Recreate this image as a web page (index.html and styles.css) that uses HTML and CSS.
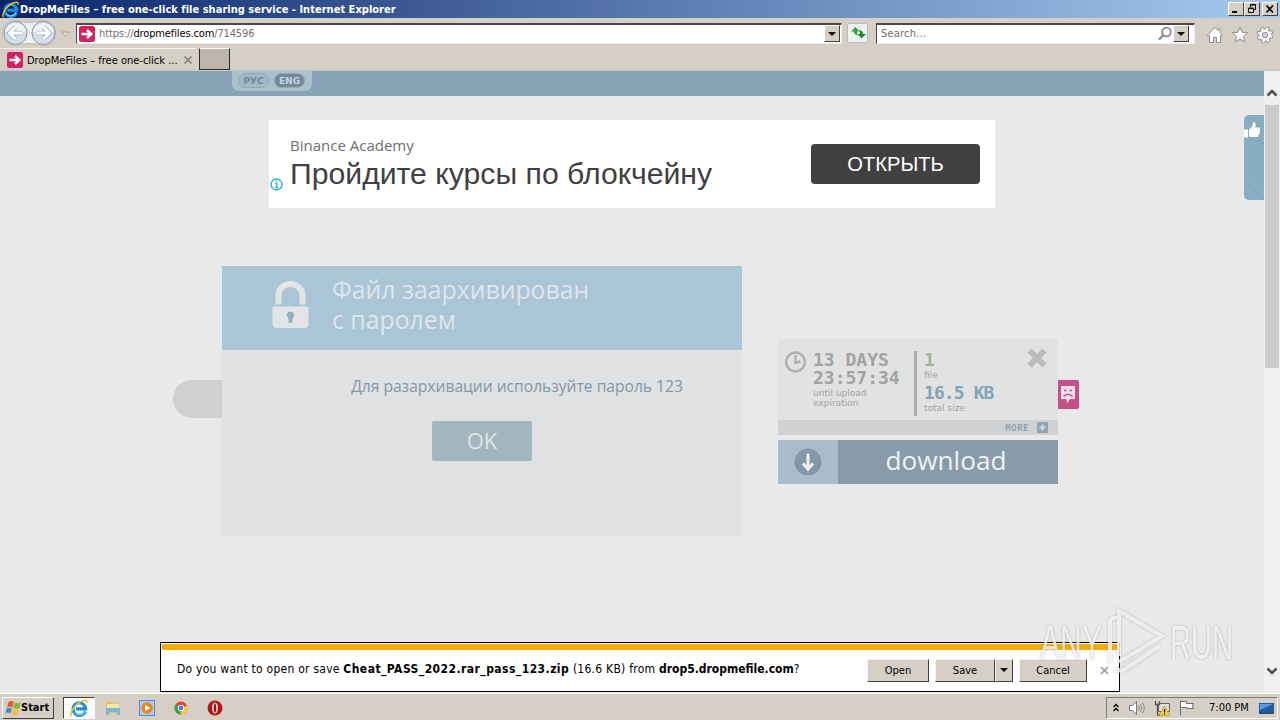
FILE: index.html
```html
<!DOCTYPE html>
<html lang="en">
<head>
    <meta charset="UTF-8">
    <meta name="viewport" content="width=device-width, initial-scale=1.0">
    <title>DropMeFiles – free one-click file sharing service</title>
    <link rel="stylesheet" href="styles.css">
</head>
<body>

    <!-- Shared icons -->
    <svg class="defs" width="0" height="0">
        <symbol id="ie" viewBox="0 0 16 16">
            <path d="M13.6 10.8A5.6 5.6 0 1 1 13.9 8.8H5.2" fill="none" stroke="#1d8fdd" stroke-width="2.8"/>
            <path d="M13.2 10.9A5.4 5.4 0 0 1 4 12" fill="none" stroke="#7ed0f8" stroke-width="1"/>
            <path d="M1.5 15C-1 12 5 4 11 1.700c3-1.200 4.500-.5 4 1.800" fill="none" stroke="#f1bd2c" stroke-width="1.400"/>
        </symbol>
        <symbol id="drop" viewBox="0 0 16 16">
            <rect width="16" height="16" rx="2.500" fill="#d5215f"/>
            <path d="M2.500 8h9M8 4l4.300 4L8 12" fill="none" stroke="#fff" stroke-width="2.400"/>
        </symbol>
    </svg>

    <!-- Title bar -->
    <div class="titlebar">
        <svg width="17" height="17"><use href="#ie"/></svg>
        <span class="title">DropMeFiles – free one-click file sharing service - Internet Explorer</span>
        <div class="window-buttons">
            <b><svg width="13" height="11"><path d="M3 9h5" stroke="#000" stroke-width="2"/></svg></b>
            <b><svg width="13" height="12"><path d="M5.500 4V1.500h5v5H8.500M5.500 2h5M3.500 5.500h5v4h-5zM3.500 5h5" fill="none" stroke="#000"/></svg></b>
            <b class="close"><svg width="13" height="12"><path d="M3.500 2.500l6.500 7M10 2.500l-6.500 7" stroke="#000" stroke-width="1.700"/></svg></b>
        </div>
    </div>

    <!-- Address bar -->
    <div class="toolbar">
        <svg class="nav-buttons" width="72" height="30" viewBox="0 0 72 30">
            <path d="M15 2.500q14 4 28 0a12.500 12.500 0 0 1 0 25q-14-4-28 0a12.500 12.500 0 0 1 0-25z" fill="#eceef1" stroke="#b9b7b8"/>
            <circle cx="15.500" cy="15" r="11.500" fill="#d3deea" stroke="#8d959f"/>
            <path d="M5 14a10.500 9 0 0 1 21 0z" fill="#edf2f7"/>
            <circle cx="43.500" cy="15" r="11.500" fill="#d3deea" stroke="#8d959f"/>
            <path d="M33 14a10.500 9 0 0 1 21 0z" fill="#edf2f7"/>
            <path d="M22 15H10M15.500 9L9.500 15l6 6" fill="none" stroke="#9fb2c6" stroke-width="4.500"/>
            <path d="M22 15H10M15.500 9L9.500 15l6 6" fill="none" stroke="#fff" stroke-width="2.800"/>
            <path d="M37 15h12M43.500 9l6 6-6 6" fill="none" stroke="#9fb2c6" stroke-width="4.500"/>
            <path d="M37 15h12M43.500 9l6 6-6 6" fill="none" stroke="#fff" stroke-width="2.800"/>
            <path d="M61.500 14h8l-4 4.500z" fill="#e4e0da" stroke="#aaa49e"/>
        </svg>
        <div class="address">
            <svg width="16" height="16"><use href="#drop"/></svg>
            <span class="url">https://<em>dropmefiles.com</em>/714596</span>
            <b class="arrow"></b>
        </div>
        <div class="refresh">
            <svg width="18" height="16"><path d="M6.500 2L2 6.500h2.800Q5 10 9 10.500 7.800 9 8 6.500h2.500z" fill="#35a535"/><path d="M12.500 13.500L17 9h-2.800Q14 5.500 10 5q1.200 1.500 1 4H8.500z" fill="#1f8a28"/></svg>
        </div>
        <div class="search">
            <span>Search...</span>
            <svg width="16" height="16"><circle cx="9.500" cy="6" r="4.300" fill="none" stroke="#83838b" stroke-width="1.700"/><path d="M6.500 9L2 13.500" stroke="#83838b" stroke-width="2.200"/></svg>
            <b class="arrow"></b>
        </div>
        <div class="tools">
            <svg width="18" height="18"><path d="M9 1.500L1.500 9l1 1.300 1-.8V16.500h4v-5h3v5h4V9.500l1 .8 1-1.300-2.500-2.600V3h-2v1.500z" fill="#fff" stroke="#8d8b8b"/></svg>
            <svg width="18" height="18"><path d="M9 1l2.200 5.300 5.500.5-4.200 3.700 1.300 5.600L9 13l-4.800 3.100 1.300-5.600L1.300 6.800l5.500-.5z" fill="#fff" stroke="#8d8b8b"/></svg>
            <svg width="18" height="18"><circle cx="9" cy="9" r="6.500" fill="none" stroke="#8d8b8b" stroke-width="3.800" stroke-dasharray="3.100 2"/><circle cx="9" cy="9" r="4.500" fill="none" stroke="#8d8b8b" stroke-width="4.500"/><circle cx="9" cy="9" r="6.300" fill="none" stroke="#fff" stroke-width="2.400" stroke-dasharray="2 2.950" stroke-dashoffset="-.4"/><circle cx="9" cy="9" r="4.400" fill="none" stroke="#fff" stroke-width="2.600"/></svg>
        </div>
    </div>

    <!-- Tabs -->
    <div class="tabs">
        <div class="tab">
            <svg width="16" height="16"><use href="#drop"/></svg>
            <span>DropMeFiles – free one-click ...</span>
            <svg class="tab-close" width="8" height="8"><path d="M.5.5l7 7M7.500.5l-7 7" stroke="#8c8681" stroke-width="1.800"/></svg>
        </div>
        <div class="new-tab"></div>
    </div>

    <div class="viewport">
        <div class="page">
            <div class="header">
                <div class="lang"><span>РУС</span><span class="active">ENG</span></div>
            </div>

            <!-- Ad banner -->
            <div class="ad">
                <svg class="ad-info" width="13" height="13"><circle cx="6.500" cy="6.500" r="5.500" fill="#fff" stroke="#15b4c9" stroke-width="1.300"/><path d="M5.300 5.700h1.500v4M5.200 9.700h3M6.500 2.800v1.500" fill="none" stroke="#15b4c9" stroke-width="1.200"/></svg>
                <div class="ad-text">
                    <p>Binance Academy</p>
                    <h2>Пройдите курсы по блокчейну</h2>
                </div>
                <button class="ad-button">ОТКРЫТЬ</button>
            </div>

            <div class="content">
                <div class="side-tab"></div>

                <!-- Password message -->
                <div class="message">
                    <div class="message-head">
                        <svg width="38" height="48" viewBox="0 0 38 48"><path d="M6.500 23.500V14a12 11 0 0 1 24 0v9.500" fill="none" stroke="#e3e4e6" stroke-width="6"/><path d="M.5 25.500h36V42.500q0 4.500-4.500 4.500H5Q.5 47 .5 42.500z" fill="#e3e4e6"/><path d="M18.500 30.500a3.700 3.700 0 0 1 2.300 6.600L20 42h-3l-.8-4.900A3.700 3.700 0 0 1 18.500 30.500z" fill="#94b0c0"/></svg>
                        <h1>Файл заархивирован<br>с паролем</h1>
                    </div>
                    <p>Для разархивации используйте пароль 123</p>
                    <button class="ok">OK</button>
                </div>

                <!-- Download card -->
                <div class="card">
                    <div class="info">
                        <svg class="clock" width="22" height="22"><circle cx="10.500" cy="11" r="9.400" fill="none" stroke="#aeb0b1" stroke-width="2.500"/><path d="M10.500 4v8l5-1.500" fill="none" stroke="#aeb0b1" stroke-width="2.400"/></svg>
                        <div class="expires">
                            <strong class="days">13 DAYS</strong>
                            <strong class="time">23:57:34</strong>
                            <small>until upload<br>expiration</small>
                        </div>
                        <div class="files">
                            <strong class="count">1</strong>
                            <small>file</small>
                            <strong class="size">16.5 KB</strong>
                            <small>total size</small>
                        </div>
                        <svg class="info-close" width="22" height="22"><path d="M3.500 3.500l15 15M18.500 3.500l-15 15" stroke="#bbbcbd" stroke-width="6"/></svg>
                    </div>
                    <div class="more">
                        <span>MORE</span>
                        <svg width="11" height="11"><rect width="11" height="11" rx="1" fill="#91a3b1"/><path d="M5.500 2.500v6M2.500 5.500h6" stroke="#d0dae1" stroke-width="2"/></svg>
                    </div>
                    <div class="download">
                        <div class="download-icon">
                            <svg width="28" height="28"><circle cx="14" cy="14" r="13.500" fill="#8499a7"/><path d="M14 5.500v15M9 15.500l5 5.500 5-5.500" fill="none" stroke="#eeeff0" stroke-width="3"/></svg>
                        </div>
                        <span>download</span>
                    </div>
                </div>
                <div class="abuse">
                    <svg width="16" height="18"><path d="M1 0h14v13h-5l-2.500 4L6 13H1z" fill="#f3dfe9"/><path d="M4 4.500h2.500M9.500 4.500H12M3.500 10.500q4.500-4.500 9 0" fill="none" stroke="#c44f89" stroke-width="1.500"/></svg>
                </div>
            </div>

            <div class="like">
                <svg width="18" height="18"><path d="M0 8.500h4v8H0zM5 8.500c3-2 4-4 4-7.500 3-.5 3 3 2 5.500h4.500q1.500 1 .2 2.500 1 1.200-.2 2.500.5 1.200-.8 2.300 0 1.700-1.200 2.200H8L5 15.500z" fill="#fff"/></svg>
            </div>
        </div>

        <!-- Scrollbar -->
        <div class="scrollbar">
            <svg width="16" height="14"><path d="M3.500 9.500L8 5l4.500 4.500" fill="none" stroke="#505050" stroke-width="2.600"/></svg>
            <div class="thumb"></div>
            <svg class="down" width="16" height="14"><path d="M3.500 4.500L8 9l4.500-4.500" fill="none" stroke="#505050" stroke-width="2.600"/></svg>
        </div>

        <!-- Download prompt -->
        <div class="prompt">
            <p>Do you want to open or save <b>Cheat_PASS_2022.rar_pass_123.zip</b> <span>(16.6 KB) from</span> <b class="host">drop5.dropmefile.com</b>?</p>
            <button class="open">Open</button>
            <button class="save">Save</button>
            <button class="save-arrow"><i class="caret"></i></button>
            <button class="cancel">Cancel</button>
            <svg width="9" height="9"><path d="M1 1l7 7M8 1L1 8" stroke="#9a9a9a" stroke-width="1.700"/></svg>
        </div>

        <!-- Watermark -->
        <svg class="watermark" width="200" height="70" viewBox="0 0 200 70">
            <text x="1" y="51" textLength="62" lengthAdjust="spacingAndGlyphs">ANY</text>
            <path d="M71 55V14q0-5 7-4M80 46V3l43 25-43 26M80 12v36M75 61l8 2 38-25"/>
            <text x="131" y="51" textLength="63" lengthAdjust="spacingAndGlyphs">RUN</text>
        </svg>
    </div>

    <!-- Taskbar -->
    <div class="taskbar">
        <div class="start">
            <svg width="16" height="16"><path d="M3.500 2q3-2 5.500 0L7.500 7.500Q4.500 6 2 7.500z" fill="#e8592a"/><path d="M10 2.500q3 1.500 6 0L14.500 8q-3 1.500-6 0z" fill="#7cb93b"/><path d="M1.500 8.500q3-1.500 5.500 0l-1.500 5q-2.500-2-5 0z" fill="#3c8ed0"/><path d="M8 9q3 1.500 6 0l-1.500 5.500q-3 1.500-6 0z" fill="#f5c02d"/></svg>
            <span>Start</span>
        </div>
        <div class="task-ie"><svg width="18" height="18"><use href="#ie"/></svg></div>
        <div class="launch">
            <svg width="16" height="16"><path d="M1 2h5l1 1.500h7V13H1z" fill="#e9bf54"/><path d="M2 4h12v8H2z" fill="#fbe7a0"/><path d="M1 8h14v7h-3v-3H4v3H1z" fill="#74b9df"/></svg>
            <svg width="16" height="16"><rect x=".5" y=".5" width="15" height="15" fill="#a9cdf0" stroke="#4d8fce"/><circle cx="8" cy="8" r="5.700" fill="#f48212"/><path d="M6 4.700v6.600L11.500 8z" fill="#fff"/></svg>
            <svg width="16" height="16"><circle cx="8" cy="8" r="6.500" fill="#e24435"/><path d="M8 8L2.400 4.800A6.500 6.500 0 0 0 7.500 14.500z" fill="#32a350"/><path d="M8 8l6-2.500a6.500 6.500 0 0 1-6.500 9z" fill="#fbca2c"/><circle cx="8" cy="8" r="3.200" fill="#fff"/><circle cx="8" cy="8" r="2.400" fill="#4583e8"/></svg>
            <svg width="16" height="16"><circle cx="8" cy="8" r="7.500" fill="#b5161b"/><ellipse cx="8" cy="8" rx="3" ry="5.500" fill="#f6dada"/><ellipse cx="8" cy="8" rx="1.200" ry="4.500" fill="#a01015"/></svg>
        </div>
        <div class="tray">
            <svg width="8" height="10"><path d="M1.500 4L4 1.500 6.500 4M1.500 8L4 5.500 6.500 8" fill="none" stroke="#000" stroke-width="1.300"/></svg>
            <svg width="18" height="16"><path d="M1.500 5.500h3l4-4v13l-4-4h-3z" fill="#fff" stroke="#777"/><path d="M10.500 5.500q1.500 2.500 0 5M12.500 4q2.500 4 0 8M14.500 2.500q3.500 5.500 0 11" fill="none" stroke="#888"/></svg>
            <svg width="16" height="16"><path d="M4.500 3.500h11v8h-11z" fill="#ddd" stroke="#666"/><path d="M1.500 1v3.500h4V1M3.500 5v10h5" fill="none" stroke="#555" stroke-width="1.300"/><path d="M10.500 6L16 15.500H5z" fill="#f8d331" stroke="#bc9511" stroke-width=".6"/><path d="M10.500 9v3.500m0 .8v1.200" stroke="#222" stroke-width="1.300"/></svg>
            <svg width="17" height="16"><path d="M2.500.5v15M2.500 1.500h6v2h7q-2 2.500 0 5H9v-1H2.500z" fill="#fff" stroke="#6f6f6f"/></svg>
            <span>7:00 PM</span>
            <svg width="15" height="12"><path d="M0 1h15v10H0z" fill="#1c5cab"/><path d="M1 2h13L1 8z" fill="#5b9bdd"/><path d="M0 9.500h15V12H0z" fill="#315070"/></svg>
        </div>
    </div>

</body>
</html>
```
FILE: styles.css
```css
* {
    box-sizing: border-box;
}

body {
    display: flex;
    flex-direction: column;
    width: 1280px;
    height: 720px;
    margin: 0;
    overflow: hidden;
    background-color: #d6cfc6;
    font-family: "DejaVu Sans Condensed", "DejaVu Sans", sans-serif;
    font-size: 11px;
    color: #000;
}

h1, h2, p {
    margin: 0;
    font-weight: normal;
}

svg {
    display: block;
    flex: none;
}

button {
    padding: 0;
    border: none;
    font-family: inherit;
    font-size: inherit;
}

.defs {
    position: absolute;
}

/* Title bar */
.titlebar {
    display: flex;
    align-items: center;
    height: 18px;
    padding: 0 2px;
    background: linear-gradient(to right, #0a246a, #a6caf0);
    color: #fff;
}

.title {
    margin-left: 1px;
    font-weight: bold;
    white-space: nowrap;
    letter-spacing: 0.02px;
}

.window-buttons {
    display: flex;
    margin-left: auto;
}

.window-buttons b {
    width: 16px;
    height: 14px;
    background-color: #d6cfc6;
    border: 1px solid;
    border-color: #fff #404040 #404040 #fff;
}

.window-buttons .close {
    margin-left: 2px;
}

/* Address bar */
.toolbar {
    display: flex;
    align-items: center;
    height: 30px;
    background-color: #d6cfc6;
}

.nav-buttons {
    margin-right: 4px;
}

.address, .search {
    display: flex;
    align-items: center;
    height: 21px;
    background-color: #fff;
    border: 1px solid;
    border-color: #4f4643 #eee9e4 #eee9e4 #4f4643;
    border-top-width: 2px;
}

.address {
    width: 766px;
    padding: 0 1px 0 2px;
}

.url {
    margin-left: 4px;
    color: #6f6f6f;
    letter-spacing: -0.13px;
}

.url em {
    color: #000;
    font-style: normal;
}

.arrow {
    display: flex;
    align-items: center;
    justify-content: center;
    width: 16px;
    height: 17px;
    background-color: #d6cfc6;
    border: 1px solid;
    border-color: #fff #404040 #404040 #fff;
}

.address .arrow {
    margin-left: auto;
}

.arrow::after, .caret {
    content: "";
    border: 4px solid transparent;
    border-top-color: #000;
    border-bottom: none;
}

.refresh {
    display: flex;
    align-items: center;
    justify-content: center;
    width: 21px;
    height: 20px;
    margin: 0 8px 0 5px;
    background-color: #edf0f1;
    border: 1px solid #b9bdc2;
    border-radius: 2px;
}

.search {
    width: 319px;
    padding: 0 5px 0 4px;
    color: #6b6b6b;
}

.search span {
    letter-spacing: 0.2px;
}

.search svg {
    margin-left: auto;
}

.tools {
    display: flex;
    gap: 7px;
    margin: 3px 0 0 11px;
}

/* Tabs */
.tabs {
    display: flex;
    height: 23px;
    border-bottom: 2px solid #cbcac8;
}

.tab {
    display: flex;
    align-items: center;
    width: 197px;
    padding: 2px 5px 0 7px;
    border-top: 1px solid #f6f2ee;
}

.tab span {
    margin-left: 4px;
    white-space: nowrap;
}

.tab-close {
    margin-left: auto;
}

.new-tab {
    width: 31px;
    height: 22px;
    margin-left: 2px;
    background-color: #bdb5ae;
    border: 1px solid #2c2826;
    border-top-color: #fff;
}

/* Browser viewport */
.viewport {
    position: relative;
    display: flex;
    height: 621px;
}

.page {
    position: relative;
    width: 1264px;
    background-color: #e9e9e9;
}

.header {
    height: 25px;
    padding-left: 232px;
    background-color: #87a3b5;
}

.lang {
    display: flex;
    gap: 5px;
    width: 80px;
    height: 20px;
    padding: 2px 6px;
    background-color: #aac0cc;
    border-radius: 0 0 7px 7px;
}

.lang span {
    width: 31px;
    height: 15px;
    border: 1px solid #94a9b7;
    border-radius: 8px;
    background-color: #a3b8c5;
    color: #71889a;
    font: bold 9px/14px "DejaVu Sans", sans-serif;
    text-align: center;
}

.lang .active {
    background-color: #72899a;
    color: #c3d3dc;
}

/* Ad banner */
.ad {
    display: flex;
    align-items: center;
    width: 726px;
    height: 88px;
    margin: 24px 0 0 269px;
    padding-right: 15px;
    background-color: #fff;
}

.ad-info {
    margin: 40px 7px 0 1px;
}

.ad-text p {
    font: 15px/18px "Open Sans", sans-serif;
    color: #6e6e6e;
}

.ad-text h2 {
    padding-top: 2px;
    font: 30.2px/36px "Liberation Sans", Arial, sans-serif;
    color: #404040;
}

.ad-button {
    width: 169px;
    height: 40px;
    margin-left: auto;
    background-color: #404040;
    border-radius: 4px;
    color: #fff;
    font: 20.2px "Liberation Sans", Arial, sans-serif;
}

/* Main content */
.content {
    display: flex;
    margin: 58px 0 0 173px;
    font-family: "Open Sans", sans-serif;
}

.side-tab {
    width: 49px;
    height: 38px;
    margin-top: 114px;
    background-color: #d0d0d0;
    border-radius: 19px 0 0 19px;
}

.message {
    width: 520px;
    height: 270px;
    background-color: #dfe1e2;
    text-align: center;
}

.message-head {
    display: flex;
    height: 84px;
    padding: 15px 0 0 50px;
    background-color: #a9c5d6;
    text-align: left;
}

.message-head h1 {
    margin: -7px 0 0 22px;
    color: #dfe5ec;
    font-size: 24.800px;
    line-height: 30px;
}

.message p {
    margin: 25px 0 0 70px;
    color: #8299a8;
    font-size: 15.600px;
    line-height: 22px;
}

.ok {
    width: 100px;
    height: 40px;
    margin-top: 24px;
    padding-bottom: 2px;
    background-color: #a3b5bd;
    border-radius: 2px;
    color: #dfe4e9;
    font-size: 22px;
}

.card {
    width: 280px;
    margin: 73px 0 0 36px;
}

.info {
    display: flex;
    height: 81px;
    padding: 12px 10px 0 7px;
    background-color: #e1e2e2;
    color: #a2a2a2;
}

.info strong, .info small {
    display: block;
    white-space: nowrap;
}

.info strong {
    height: 18px;
    font: bold 18px/18px "DejaVu Sans Mono", monospace;
}

.info small {
    padding-top: 1px;
    font: 9px/10px "DejaVu Sans", sans-serif;
}

.expires {
    width: 104px;
    height: 65px;
    margin-left: 6px;
    border-right: 3px solid #adadad;
}

.files {
    margin-left: 7px;
}

.files .count {
    color: #9fb798;
}

.files .size {
    margin-top: 4px;
    color: #85a2b8;
    letter-spacing: -0.9px;
}

.info-close {
    margin: -4px 0 0 auto;
}

.more {
    display: flex;
    align-items: center;
    justify-content: flex-end;
    gap: 8px;
    height: 15px;
    padding-right: 10px;
    background-color: #cfd1d3;
    color: #91a3b1;
    font: bold 9px "DejaVu Sans Mono", monospace;
    letter-spacing: 0.5px;
}

.download {
    display: flex;
    height: 44px;
    margin-top: 5px;
    background-color: #899ba9;
    color: #eff2f4;
    font-size: 26.200px;
    line-height: 41px;
}

.download-icon {
    width: 60px;
    padding: 8px 16px;
    background-color: #a9bccb;
}

.download > span {
    flex: 1;
    padding-right: 4px;
    text-align: center;
}

.abuse {
    width: 21px;
    height: 29px;
    margin-top: 114px;
    padding: 6px 0 0 2px;
    background-color: #c44f89;
    border-radius: 0 2px 2px 0;
}

.like {
    position: absolute;
    top: 44px;
    right: 0;
    width: 20px;
    height: 85px;
    padding-top: 6px;
    border-radius: 5px 0 0 5px;
    background: repeating-linear-gradient(45deg, #8bb0c4 0 2px, #80a7bd 2px 3px);
}

/* Scrollbar */
.scrollbar {
    display: flex;
    flex-direction: column;
    width: 16px;
    padding-top: 15px;
    background-color: #f0f0f0;
}

.thumb {
    width: 14px;
    height: 263px;
    margin: 5px 0 0 1px;
    background-color: #cbcbcb;
}

.down {
    margin: auto 0 14px;
}

/* Download prompt */
.prompt {
    position: absolute;
    left: 160px;
    bottom: 0;
    display: flex;
    align-items: center;
    width: 960px;
    height: 50px;
    padding: 6px 10px 0 16px;
    background: linear-gradient(#f5ad05, #f5ad05) 1px 1px / 956px 6px no-repeat #fff;
    border: 1px solid #000;
}

.prompt p {
    width: 690px;
    padding-bottom: 2px;
    font-size: 12px;
    letter-spacing: 0.25px;
    white-space: nowrap;
}

.prompt p b {
    letter-spacing: 0.45px;
}

.prompt p .host {
    letter-spacing: 0;
}

.prompt button {
    display: flex;
    align-items: center;
    justify-content: center;
    height: 23px;
    background-color: #d6cfc6;
    border: 1px solid;
    border-color: #f5f3ef #404040 #404040 #f5f3ef;
}

.prompt .open {
    width: 62px;
}

.prompt .save {
    width: 60px;
    margin-left: 6px;
}

.prompt .save-arrow {
    width: 18px;
}

.prompt .cancel {
    width: 68px;
    margin-left: 6px;
}

.prompt svg {
    margin-left: auto;
}

/* Watermark */
.watermark {
    position: absolute;
    left: 1039px;
    top: 537px;
    filter: drop-shadow(0 0 1px rgba(110, 110, 110, 0.6));
}

.watermark text {
    fill: rgba(255, 255, 255, 0.75);
    font: 49px "Liberation Sans", sans-serif;
}

.watermark path {
    fill: none;
    stroke: rgba(255, 255, 255, 0.75);
    stroke-width: 4px;
}

/* Taskbar */
.taskbar {
    display: flex;
    align-items: center;
    height: 28px;
    padding: 2px 2px 0;
    background-color: #d6cfc6;
    border-top: 1px solid #efebe6;
    box-shadow: inset 0 1px #fff;
}

.start {
    display: flex;
    align-items: center;
    width: 52px;
    height: 22px;
    padding-left: 2px;
    border: 1px solid;
    border-color: #fff #404040 #404040 #fff;
    font-weight: bold;
}

.task-ie {
    width: 32px;
    height: 22px;
    margin-left: 9px;
    padding: 1px 6px;
    background-color: #fff;
    border: 1px solid #fff;
    border-top-color: #404040;
    border-left-color: #404040;
}

.launch {
    display: flex;
    gap: 18px;
    margin-left: 10px;
}

.tray {
    display: flex;
    align-items: center;
    width: 172px;
    height: 22px;
    margin-left: auto;
    padding-left: 5px;
    border: 1px solid;
    border-color: #807c78 #fff #fff #807c78;
}

.tray svg + svg {
    margin-left: 8px;
}

.tray span {
    width: 50px;
    margin-left: 14px;
    white-space: nowrap;
}
```
